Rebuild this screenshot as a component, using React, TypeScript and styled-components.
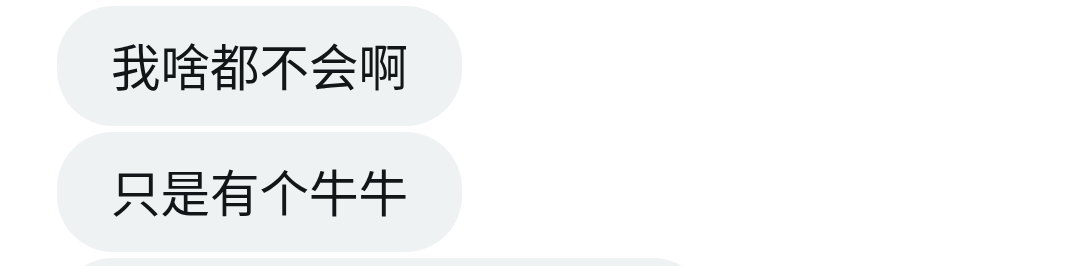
import React from "react";
import styled, { createGlobalStyle } from "styled-components";

const GlobalStyle = createGlobalStyle`
  html, body {
    margin: 0;
    padding: 0;
    background: #ffffff;
  }
  body {
    font-family: "Noto Sans CJK SC", "Noto Sans", sans-serif;
  }
`;

const Thread = styled.div`
  display: flex;
  flex-direction: column;
  align-items: flex-start;
  gap: 6px;
  padding: 6px 0 0 57px;
  height: 266px;
  box-sizing: border-box;
  overflow: hidden;
`;

const Bubble = styled.div<{ $width?: number }>`
  box-sizing: border-box;
  height: 120px;
  ${(p) => (p.$width ? `width: ${p.$width}px;` : "")}
  padding: 0 54px 3px;
  display: flex;
  align-items: center;
  flex-shrink: 0;
  background: #eff2f3;
  border-radius: 56px;
  color: #131618;
  font-size: 49.5px;
  line-height: 1;
  white-space: nowrap;
`;

const messages = ["我啥都不会啊", "只是有个牛牛"];

export default function App() {
  return (
    <>
      <GlobalStyle />
      <Thread>
        {messages.map((m) => (
          <Bubble key={m}>{m}</Bubble>
        ))}
        <Bubble $width={652} />
      </Thread>
    </>
  );
}
